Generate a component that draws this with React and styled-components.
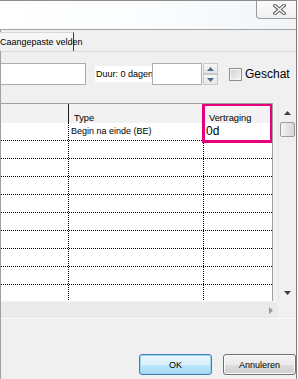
import React from 'react';
import styled, { createGlobalStyle } from 'styled-components';

const GlobalStyle = createGlobalStyle`
  html, body {
    margin: 0;
    padding: 0;
    background: #ffffff;
  }
  body {
    font-family: "Liberation Sans", Arial, sans-serif;
    font-size: 9px;
    color: #000;
  }
`;

const Window = styled.div`
  width: 297px;
  height: 379px;
  box-sizing: border-box;
  border-right: 1px solid #7c7c7c;
  display: flex;
  flex-direction: column;
  overflow: hidden;
`;

const TitleBar = styled.div`
  height: 30px;
  box-sizing: border-box;
  border-top: 1px solid #8c8c8c;
  border-bottom: 1px solid #a3a3a3;
  background: linear-gradient(100deg, #ffffff 0%, #fbfdfe 45%, #f2f5f8 100%);
  display: flex;
  justify-content: flex-end;
  align-items: flex-start;
`;

const CloseButton = styled.div`
  width: 40px;
  height: 18px;
  box-sizing: border-box;
  border-left: 1px solid #9a9a9a;
  border-bottom: 1px solid #9a9a9a;
  border-bottom-left-radius: 4px;
  background: linear-gradient(#fbfbfb, #f0f0f0);
  display: flex;
  align-items: center;
  justify-content: center;
  padding-left: 6px;
`;

const Body = styled.div`
  flex: 1;
  background: #f0f0f0;
  border-left: 1px solid #a0a0a0;
  display: flex;
  flex-direction: column;
`;

const TabStrip = styled.div`
  height: 21px;
  box-sizing: border-box;
  padding-top: 2px;
  display: flex;
  margin-left: -1px;
`;

const Tab = styled.div`
  width: 74px;
  height: 19px;
  box-sizing: border-box;
  border-top: 1px solid #d6d6d6;
  border-right: 1px solid #3a3a3a;
  background: linear-gradient(#f8f8f8, #efefef);
  font-size: 9px;
  line-height: 19px;
  white-space: nowrap;
  overflow: visible;
`;

const Panel = styled.div`
  border-top: 1px solid #d9d9d9;
  padding-top: 11px;
  display: flex;
  flex-direction: column;
`;

const FieldsRow = styled.div`
  height: 22px;
  display: flex;
  align-items: center;
`;

const TextBox = styled.div`
  width: ${(p) => p.$w}px;
  height: 22px;
  box-sizing: border-box;
  background: #fff;
  border: 1px solid #abadb3;
  border-left-width: ${(p) => (p.$cut ? 0 : 1)}px;
`;

const Label = styled.span`
  margin-left: 9px;
  padding: 2px 0 2px 1px;
  background: #fff;
  font-size: 9px;
  line-height: 12px;
  white-space: nowrap;
  width: 56px;
`;

const Spinner = styled.div`
  margin-left: 1px;
  width: 15px;
  height: 22px;
  display: flex;
  flex-direction: column;
`;

const SpinButton = styled.div`
  height: 11px;
  box-sizing: border-box;
  border: 1px solid #c9c9c9;
  background: linear-gradient(#f7f7f7, #e6e6e6);
  display: flex;
  align-items: center;
  justify-content: center;
`;

const CheckBox = styled.div`
  margin-left: 11px;
  width: 13px;
  height: 13px;
  box-sizing: border-box;
  border: 1px solid #8e8f8f;
  background: linear-gradient(135deg, #d2d2d2, #f4f4f4);
  box-shadow: inset 0 0 0 1px #f4f4f4;
`;

const CheckLabel = styled.span`
  margin-left: 3px;
  font-size: 12px;
  white-space: nowrap;
`;

const GridArea = styled.div`
  margin-top: 18px;
  display: grid;
  grid-template-columns: 277px 18px;
  grid-template-rows: 198px 17px;
  border-bottom: 1px solid #fafafa;
`;

const TableWrap = styled.div`
  background: #f0f0f0;
`;

const Table = styled.div`
  position: relative;
  width: 272px;
  height: 198px;
  box-sizing: border-box;
  border-top: 1px solid #a0a0a0;
  border-right: 1px solid #a0a0a0;
  overflow: hidden;
  background: #fff;
`;

const HeaderRow = styled.div`
  display: grid;
  grid-template-columns: 68px 135px 1fr;
  height: 19px;
  background: #f2f2f2;
`;

const HeaderCell = styled.div`
  box-sizing: border-box;
  border-right: ${(p) => (p.$divider ? '1px solid #1e1e1e' : 'none')};
  padding-left: 5px;
  font-size: 9.3px;
  line-height: 12px;
  padding-top: 8px;
  white-space: nowrap;
`;

const Row = styled.div`
  display: grid;
  grid-template-columns: 68px 135px 1fr;
  height: 18px;
  box-sizing: border-box;
  border-bottom: 1px dotted #000;
`;

const Cell = styled.div`
  box-sizing: border-box;
  border-right: ${(p) => (p.$last ? 'none' : '1px dotted #000')};
  padding-left: 2px;
  font-size: ${(p) => (p.$big ? 12 : 9)}px;
  line-height: 17px;
  white-space: nowrap;
`;

const Highlight = styled.div`
  position: absolute;
  left: 201px;
  top: -1px;
  width: 71px;
  height: 40px;
  box-sizing: border-box;
  border: 3px solid #e5007e;
`;

const VScroll = styled.div`
  background: #f0f0f0;
  border-left: 1px solid #e4e4e4;
  display: flex;
  flex-direction: column;
  align-items: center;
`;

const ArrowBox = styled.div`
  height: ${(p) => p.$h}px;
  width: 100%;
  display: flex;
  align-items: center;
  justify-content: center;
`;

const Thumb = styled.div`
  width: 15px;
  height: 15px;
  box-sizing: border-box;
  border: 1px solid #9b9b9b;
  border-radius: 2px;
  background: linear-gradient(90deg, #f4f4f4, #e4e4e4 50%, #d6d6d6);
`;

const Track = styled.div`
  flex: 1;
`;

const HScroll = styled.div`
  background: #eaeaea;
  border-top: 1px solid #f6f6f6;
  display: flex;
  justify-content: flex-end;
  align-items: center;
  padding-right: 5px;
`;

const Corner = styled.div`
  background: #f0f0f0;
`;

const Footer = styled.div`
  flex: 1;
  display: flex;
  justify-content: flex-end;
  align-items: flex-start;
  gap: 11px;
  padding-top: 35px;
`;

const Button = styled.div`
  width: 73px;
  height: 21px;
  box-sizing: border-box;
  border-radius: 3px;
  border: 1px solid ${(p) => (p.$primary ? '#3c7fb1' : '#707070')};
  background: ${(p) =>
    p.$primary
      ? 'linear-gradient(#eaf6fd 0%, #d9f0fc 50%, #bee6fd 51%, #a7d9f5 100%)'
      : 'linear-gradient(#f2f2f2 0%, #ebebeb 50%, #dddddd 51%, #cfcfcf 100%)'};
  box-shadow: inset 0 0 0 1px ${(p) => (p.$primary ? '#9fd6f5' : '#fcfcfc')};
  font-size: 9px;
  display: flex;
  align-items: center;
  justify-content: center;
`;

const CloseIcon = () => (
  <svg width="13" height="11" viewBox="0 0 13 11">
    <path d="M2 1.5 L11 9.5 M11 1.5 L2 9.5" stroke="#5f5f5f" strokeWidth="3.6" strokeLinecap="square" />
    <path d="M2 1.5 L11 9.5 M11 1.5 L2 9.5" stroke="#f4f4f4" strokeWidth="1.6" strokeLinecap="square" />
  </svg>
);

const Triangle = ({ dir, color = '#4d4d4d', size = 7 }) => {
  const pts = {
    up: '0,4 3.5,0 7,4',
    down: '0,0 7,0 3.5,4',
    right: '0,0 4,3.5 0,7',
  }[dir];
  const w = dir === 'right' ? 4 : size;
  const h = dir === 'right' ? 7 : 4;
  return (
    <svg width={w} height={h} viewBox={`0 0 ${w} ${h}`}>
      <polygon points={pts} fill={color} />
    </svg>
  );
};

const rows = Array.from({ length: 10 });

export default function App() {
  return (
    <>
      <GlobalStyle />
      <Window>
        <TitleBar>
          <CloseButton>
            <CloseIcon />
          </CloseButton>
        </TitleBar>
        <Body>
          <TabStrip>
            <Tab>Caangepaste velden</Tab>
          </TabStrip>
          <Panel>
            <FieldsRow>
              <TextBox $w={85} $cut />
              <Label>Duur: 0 dagen</Label>
              <TextBox $w={50} />
              <Spinner>
                <SpinButton>
                  <Triangle dir="up" color="#4e6a8c" />
                </SpinButton>
                <SpinButton>
                  <Triangle dir="down" color="#4e6a8c" />
                </SpinButton>
              </Spinner>
              <CheckBox />
              <CheckLabel>Geschat</CheckLabel>
            </FieldsRow>
            <GridArea>
              <TableWrap>
                <Table>
                  <HeaderRow>
                    <HeaderCell $divider />
                    <HeaderCell>Type</HeaderCell>
                    <HeaderCell>Vertraging</HeaderCell>
                  </HeaderRow>
                  {rows.map((_, i) => (
                    <Row key={i}>
                      <Cell />
                      <Cell>{i === 0 ? 'Begin na einde (BE)' : ''}</Cell>
                      <Cell $last $big>{i === 0 ? '0d' : ''}</Cell>
                    </Row>
                  ))}
                  <Highlight />
                </Table>
              </TableWrap>
              <VScroll>
                <ArrowBox $h={19}>
                  <Triangle dir="up" color="#3f3f3f" />
                </ArrowBox>
                <Thumb />
                <Track />
                <ArrowBox $h={17}>
                  <Triangle dir="down" color="#3f3f3f" />
                </ArrowBox>
              </VScroll>
              <HScroll>
                <Triangle dir="right" color="#9a9a9a" />
              </HScroll>
              <Corner />
            </GridArea>
          </Panel>
          <Footer>
            <Button $primary>OK</Button>
            <Button>Annuleren</Button>
          </Footer>
        </Body>
      </Window>
    </>
  );
}
